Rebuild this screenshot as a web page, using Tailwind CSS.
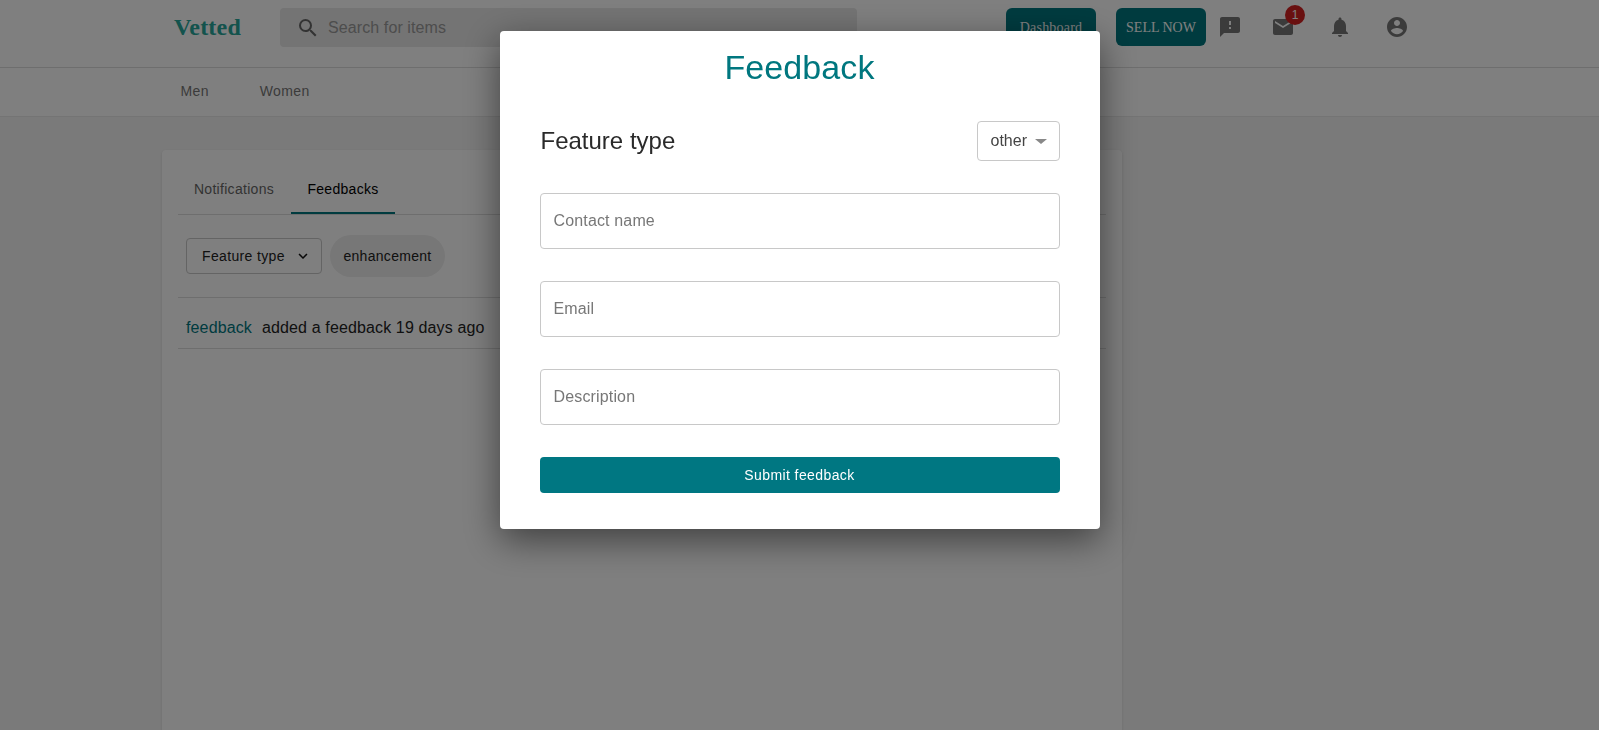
<!DOCTYPE html>
<html lang="en">
<head>
<meta charset="utf-8">
<title>Feedback</title>
<script src="https://cdn.jsdelivr.net/npm/@tailwindcss/browser@4"></script>
</head>
<body class="h-[730px] overflow-hidden bg-[#f5f5f5] font-['Liberation_Sans',Arial,sans-serif] text-[#222]">
<header class="h-[68px] border-b border-[#ddd] bg-[#fff] flex items-start">
  <div class="w-[174px] shrink-0"></div>
  <div class="w-[106px] shrink-0 h-[54px] flex items-center font-['Liberation_Serif',serif] font-bold text-[24px] text-[#26a69a] tracking-[0.2px]">Vetted</div>
  <div class="mt-2 w-[577px] h-[39px] rounded bg-[#e8e8e8] flex items-center pl-[16px] gap-[8px] shrink-0">
    <svg class="w-6 h-6 fill-[#666]" viewBox="0 0 24 24"><path d="M15.5 14h-.79l-.28-.27A6.471 6.471 0 0 0 16 9.5 6.5 6.5 0 1 0 9.5 16c1.61 0 3.09-.59 4.23-1.57l.27.28v.79l5 4.99L20.49 19l-4.99-5zm-6 0C7.01 14 5 11.99 5 9.5S7.01 5 9.5 5 14 7.01 14 9.5 11.99 14 9.5 14z"/></svg>
    <span class="text-[16px] text-[#9a9a9a] tracking-[0.1px]">Search for items</span>
  </div>
  <div class="ml-[149px] mt-2 w-[90px] h-[38px] rounded-md bg-[#00777f] flex items-center justify-center font-['Liberation_Serif',serif] text-[14px] text-white tracking-[0.2px]">Dashboard</div>
  <div class="ml-5 mt-2 w-[90px] h-[38px] rounded-md bg-[#00777f] flex items-center justify-center font-['Liberation_Serif',serif] text-[14px] text-white">SELL NOW</div>
  <div class="mt-[15px] ml-3 flex items-start">
    <svg class="w-6 h-6 fill-[#777]" viewBox="0 0 24 24"><path d="M20 2H4c-1.1 0-1.99.9-1.99 2L2 22l4-4h14c1.1 0 2-.9 2-2V4c0-1.1-.9-2-2-2zm-7 12h-2v-2h2v2zm0-4h-2V6h2v4z"/></svg>
    <div class="relative ml-[29px]">
      <svg class="w-6 h-6 fill-[#777]" viewBox="0 0 24 24"><path d="M20 4H4c-1.1 0-1.99.9-1.99 2L2 18c0 1.1.9 2 2 2h16c1.1 0 2-.9 2-2V6c0-1.1-.9-2-2-2zm0 4l-8 5-8-5V6l8 5 8-5v2z"/></svg>
      <span class="absolute -top-[10px] left-[14px] w-5 h-5 rounded-full bg-[#d32020] flex items-center justify-center text-[12px] text-white">1</span>
    </div>
    <svg class="ml-[33px] w-6 h-6 fill-[#777]" viewBox="0 0 24 24"><path d="M12 22c1.1 0 2-.9 2-2h-4c0 1.1.89 2 2 2zm6-6v-5c0-3.07-1.64-5.64-4.5-6.32V4c0-.83-.67-1.5-1.5-1.5s-1.5.67-1.5 1.5v.68C7.63 5.36 6 7.92 6 11v5l-2 2v1h16v-1l-2-2z"/></svg>
    <svg class="ml-[33px] w-6 h-6 fill-[#777]" viewBox="0 0 24 24"><path d="M12 2C6.48 2 2 6.48 2 12s4.48 10 10 10 10-4.48 10-10S17.52 2 12 2zm0 3c1.66 0 3 1.34 3 3s-1.34 3-3 3-3-1.34-3-3 1.34-3 3-3zm0 14.2c-2.5 0-4.71-1.28-6-3.22.03-1.99 4-3.08 6-3.08 1.99 0 5.97 1.09 6 3.08-1.29 1.94-3.5 3.22-6 3.22z"/></svg>
  </div>
</header>
<nav class="h-[49px] border-b border-[#e8e8e8] bg-white flex items-center pl-[180.5px] pb-[2px] gap-[51px] text-[14px] text-[#777] tracking-[0.35px]">
  <span>Men</span><span>Women</span>
</nav>
<main class="ml-[162px] mt-[33px] w-[960px] h-[600px] rounded bg-white shadow-[0_1px_3px_rgba(0,0,0,0.12)] px-4">
  <div class="h-[65px] border-b border-[#ddd] flex items-end">
    <div class="w-[113px] h-[65px] pt-[15px] pr-[1px] flex items-center justify-center text-[14px] text-[#666] tracking-[0.3px]">Notifications</div>
    <div class="w-[104px] h-[65px] pt-[17px] flex items-center justify-center text-[14px] text-black border-b-2 border-[#00777f] tracking-[0.3px]">Feedbacks</div>
  </div>
  <div class="h-[83px] border-b border-[#ddd] pl-2 flex items-center gap-2">
    <div class="w-[136px] h-[36px] rounded border border-[#c8c8c8] flex items-center pl-[15px] gap-[9px] text-[14px] text-[#222] tracking-[0.35px]">
      <span>Feature type</span>
      <svg class="w-[18px] h-[18px] fill-[#111]" viewBox="0 0 24 24"><path d="M7.41 8.59 12 13.17l4.59-4.58L18 10l-6 6-6-6 1.41-1.41z"/></svg>
    </div>
    <div class="w-[115px] h-[42px] rounded-full bg-[#eeeeee] flex items-center justify-center text-[14px] text-[#222] tracking-[0.3px]">enhancement</div>
  </div>
  <div class="h-[51px] border-b border-[#ddd] pl-2 pt-[10px] flex items-center gap-[10px] text-[16px] tracking-[0.13px]">
    <span class="text-[#00777f]">feedback</span><span class="text-[#222]">added a feedback 19 days ago</span>
  </div>
</main>

<div class="fixed inset-0 bg-black/50 flex justify-center items-start pt-[31px]">
  <div class="w-[600px] h-[498px] bg-white rounded shadow-[0_11px_36px_rgba(0,0,0,0.5)] px-10">
    <h2 class="h-[73px] pt-[12px] text-center text-[34px] leading-[48px] text-[#00777f] tracking-[0.1px]">Feedback</h2>
    <div class="mt-[17px] h-[40px] flex items-center justify-between">
      <span class="text-[24px] leading-[36px] pl-[1px] text-[#2a2a2a]">Feature type</span>
      <div class="w-[83px] h-[40px] rounded border border-[#c8c8c8] flex items-center pl-[13px] gap-[8px] text-[16px] text-[#444]">
        <span>other</span>
        <span class="w-0 h-0 border-x-[6px] border-x-transparent border-t-[5px] border-t-[#888] mt-[1px]"></span>
      </div>
    </div>
    <div class="mt-8 flex flex-col gap-8">
      <div class="h-[56px] rounded border border-[#c8c8c8] flex items-center pl-[13px] text-[16px] text-[#777] tracking-[0.15px]">Contact name</div>
      <div class="h-[56px] rounded border border-[#c8c8c8] flex items-center pl-[13px] text-[16px] text-[#777] tracking-[0.15px]">Email</div>
      <div class="h-[56px] rounded border border-[#c8c8c8] flex items-center pl-[13px] text-[16px] text-[#777] tracking-[0.15px]">Description</div>
      <div class="h-[36px] rounded bg-[#007782] flex items-center justify-center text-[14px] text-white tracking-[0.4px]">Submit feedback</div>
    </div>
  </div>
</div>
</body>
</html>
